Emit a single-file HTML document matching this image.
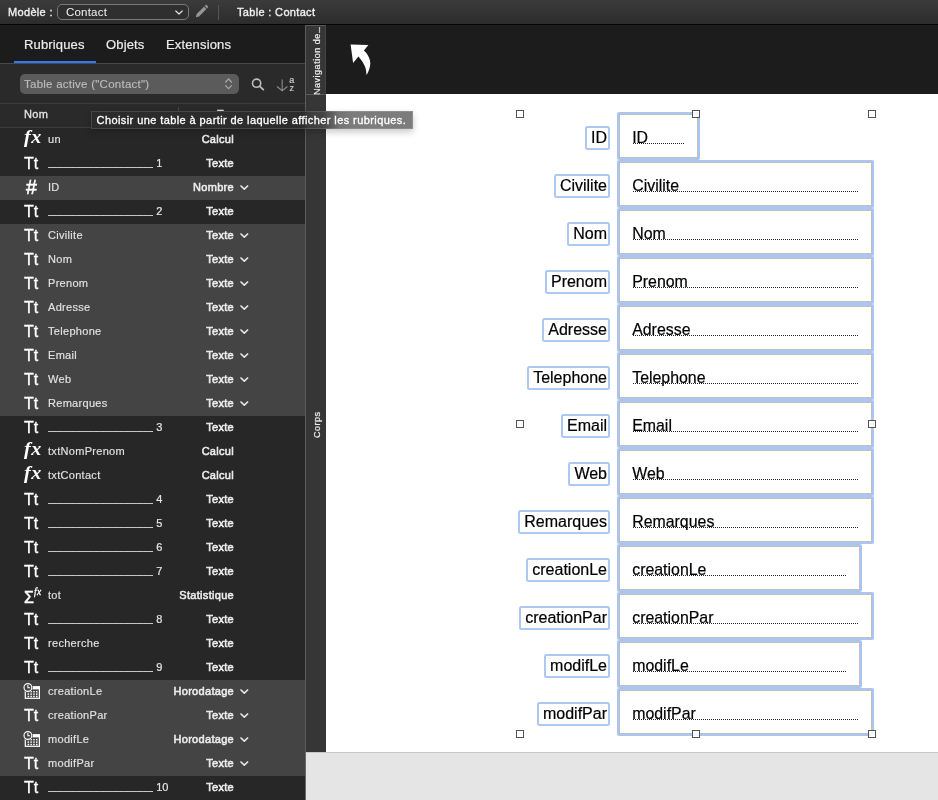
<!DOCTYPE html>
<html lang="fr">
<head>
<meta charset="utf-8">
<title>Modèle : Contact</title>
<style>
*{box-sizing:border-box;margin:0;padding:0}
html,body{width:938px;height:800px;overflow:hidden;background:#262626}
body{position:relative;font-family:"Liberation Sans",sans-serif;font-size:11px;color:#e6e6e6}
#app{position:absolute;left:0;top:0;width:938px;height:800px;overflow:hidden;will-change:transform}
#toolbar{position:absolute;left:0;top:0;width:938px;height:25px;background:linear-gradient(#3b3b3b,#2c2c2c);border-bottom:1px solid #050505}
#toolbar .lbl{position:absolute;left:8px;top:6px;font-size:11px;color:#f0f0f0;-webkit-text-stroke:0.35px #f0f0f0;letter-spacing:0.33px}
#sel{position:absolute;left:57px;top:4px;width:132px;height:16px;border:1px solid #7a7a7a;border-radius:5px;background:#2f2f2f}
#sel span{position:absolute;left:8px;top:0px;font-size:11.5px;color:#f2f2f2;line-height:14px;letter-spacing:0.2px}
#sel svg{position:absolute;left:116px;top:4px}
#pencil{position:absolute;left:194px;top:4px}
#tsep{position:absolute;left:218px;top:5px;width:1px;height:15px;background:#555}
#ttl{position:absolute;left:237px;top:6px;font-size:11px;color:#f0f0f0;-webkit-text-stroke:0.35px #f0f0f0;letter-spacing:0.33px}
#left{position:absolute;left:0;top:25px;width:305px;height:775px;background:#272727;overflow:hidden}
#tabs{position:absolute;left:0;top:0;width:305px;height:39px;background:#1c1c1c;border-bottom:1px solid #484848}
#tabs span{position:absolute;top:12px;font-size:13px;color:#ececec;letter-spacing:0.15px;-webkit-text-stroke:0.2px #ececec}
#tabul{position:absolute;left:14px;top:36px;width:82px;height:2.3px;background:#3478f6}
#searchrow{position:absolute;left:0;top:39px;width:305px;height:40px;background:#2a2a2a;border-bottom:1px solid #3d3d3d}
#pop{position:absolute;left:20px;top:10px;width:219px;height:20px;border-radius:5px;background:#5b5b5b}
#pop span{position:absolute;left:4px;top:4px;font-size:11.5px;color:#bdbdbd;letter-spacing:0.25px;-webkit-text-stroke:0.15px #bdbdbd}
#hdr{position:absolute;left:0;top:79px;width:305px;height:24px;background:#2a2a2a;border-bottom:1px solid #3d3d3d}
#hdr span{position:absolute;left:24px;top:4px;font-size:11px;color:#e6e6e6;-webkit-text-stroke:0.3px #e6e6e6;letter-spacing:0.3px}
#hdr i{position:absolute;left:178px;top:3px;width:1px;height:17px;background:#444}
.row{position:absolute;left:0;width:305px;height:24px;line-height:22px;white-space:nowrap}
.row.hl{background:#444}
.ic{position:absolute}
.tt{left:24px;top:0;font-size:16px;color:#fff;line-height:23px;-webkit-text-stroke:0.3px #fff}
.fx{left:24px;top:0;font-family:"Liberation Serif",serif;font-style:italic;font-weight:bold;font-size:18px;color:#fff;line-height:19px;letter-spacing:0.5px;transform:scaleX(1.12);transform-origin:0 0}
.num{left:26px;top:0;font-size:19.5px;color:#fff;line-height:23px;-webkit-text-stroke:0.5px #fff}
.sum{left:24px;top:0;font-size:16px;color:#fff;line-height:27px;-webkit-text-stroke:0.5px #fff}
.sum i{font-family:"Liberation Serif",serif;font-style:italic;font-size:9.5px;position:relative;top:-8px;left:0px;-webkit-text-stroke:0.3px #fff;letter-spacing:.5px}
.ts{left:23px;top:3px}
.nm{position:absolute;left:48px;top:0;color:#e2e2e2;letter-spacing:0.3px;-webkit-text-stroke:0.15px #e2e2e2}
.us{position:absolute;left:48px;top:-1px;width:105px;overflow:hidden;color:#d8d8d8;-webkit-text-stroke:0.3px #d8d8d8}
.un{position:absolute;left:156.2px;top:0;color:#e6e6e6;-webkit-text-stroke:0.2px #e6e6e6}
.ty{position:absolute;right:71px;top:0;color:#ececec;-webkit-text-stroke:0.55px #ececec;letter-spacing:0.3px}
.chev{position:absolute;left:240px;top:9px}
#strip{position:absolute;left:305px;top:25px;width:21px;height:727px;background:#363636;border-left:1px solid #5c5c5c}
#vline{position:absolute;left:305px;top:752px;width:1px;height:48px;background:#6a6a6a}
#nav{position:absolute;left:0;top:0;width:20px;height:70px;border-top:1px solid #5a5a5a;border-bottom:1px solid #5a5a5a;border-right:1px solid #444}
.vt{position:absolute;transform-origin:0 0;transform:rotate(-90deg);white-space:nowrap;font-size:9px;color:#f0f0f0;letter-spacing:0.52px;-webkit-text-stroke:0.2px #f0f0f0}
#band{position:absolute;left:326px;top:25px;width:612px;height:69px;background:#1c1c1c}
#paper{position:absolute;left:326px;top:94px;width:612px;height:658px;background:#fff}
#below{position:absolute;left:306px;top:752px;width:632px;height:48px;background:#e5e5e5;border-top:1px solid #c8c8c8}
.lab{-webkit-text-stroke:0.2px #000;position:absolute;right:328px;height:24px;border:2px solid #adc8f3;border-radius:2.5px;background:#fff;font-size:16px;color:#000;line-height:20px;padding:0 1px 0 4.2px;white-space:nowrap}
.fld{position:absolute;left:617px;height:48px;border:2px solid #a9c6f3;border-radius:2px;background:#fff}
.fld:after{content:"";position:absolute;left:0;top:0;right:0;bottom:0;border:1px solid #c2beba}
.ft{-webkit-text-stroke:0.2px #000;position:absolute;left:13.2px;top:15px;font-size:15.9px;color:#000;line-height:18px;white-space:nowrap}
.dots{position:absolute;left:14px;right:13px;top:29px;height:1px;background:repeating-linear-gradient(90deg,#222 0,#222 1px,transparent 1px,transparent 2px)}
.hd{position:absolute;width:8px;height:8px;border:1px solid #555;background:rgba(255,255,255,.85)}
#tip{position:absolute;left:91px;top:111px;width:322px;height:18px;border:1px solid rgba(255,255,255,.13);background:linear-gradient(90deg,#2b2b2b 0,#2c2c2c 212px,#3c3c3c 217px,#454545 232px,#727272 248px,#7c7c7c 262px,#7c7c7c 100%);background-origin:border-box;box-shadow:0 3px 7px rgba(0,0,0,.22);font-size:11px;color:#fff;-webkit-text-stroke:0.3px #fff;line-height:16px;padding-left:4.6px;white-space:nowrap;letter-spacing:0.41px}
</style>
</head>
<body><div id="app">
<div id="toolbar">
 <span class="lbl">Modèle :</span>
 <div id="sel"><span>Contact</span><svg width="10" height="7" viewBox="0 0 10 7"><path d="M1.8 2L5 5L8.2 2" fill="none" stroke="#e0e0e0" stroke-width="1.2" stroke-linecap="round" stroke-linejoin="round"/></svg></div>
 <svg id="pencil" width="15" height="15" viewBox="0 0 16 16"><path d="M2 14L2.8 10.6L10.6 2.8L13.2 5.4L5.4 13.2Z" fill="#969696"/><path d="M11.3 2.1L12.3 1.1Q12.9 .6 13.5 1.1L14.9 2.5Q15.4 3.1 14.9 3.7L13.9 4.7Z" fill="#8f8f8f"/></svg>
 <div id="tsep"></div>
 <span id="ttl">Table : Contact</span>
</div>
<div id="left">
 <div id="tabs"><span style="left:24px">Rubriques</span><span style="left:106px">Objets</span><span style="left:166px">Extensions</span></div>
 <div id="tabul"></div>
 <div id="searchrow">
  <div id="pop"><span>Table active ("Contact")</span>
   <svg style="position:absolute;left:204px;top:4px" width="9" height="12" viewBox="0 0 9 12"><path d="M1.6 4L4.55 1L7.5 4M1.6 7.6L4.55 10.6L7.5 7.6" fill="none" stroke="#a6a6a6" stroke-width="1.3" stroke-linecap="round" stroke-linejoin="round"/></svg>
  </div>
  <svg style="position:absolute;left:250px;top:13px" width="15" height="15" viewBox="0 0 15 15"><circle cx="6.6" cy="6.2" r="4.1" fill="none" stroke="#bdbdbd" stroke-width="1.6"/><path d="M9.6 9.2L13.3 12.6" stroke="#bdbdbd" stroke-width="1.8" stroke-linecap="round"/></svg>
  <svg style="position:absolute;left:275px;top:13px" width="22" height="16" viewBox="0 0 22 16"><path d="M7.2 2.5V13.5M2 9.5L7.2 13.7L12.4 9.5" fill="none" stroke="#8a8a8a" stroke-width="1.1"/><text x="14.2" y="6.2" font-family="Liberation Sans, sans-serif" font-size="9" fill="#c8c8c8" stroke="#c8c8c8" stroke-width=".2">a</text><text x="14.4" y="13.6" font-family="Liberation Sans, sans-serif" font-size="9" fill="#c8c8c8" stroke="#c8c8c8" stroke-width=".2">z</text></svg>
 </div>
 <div id="hdr"><span>Nom</span><i></i><span style="left:217px">Type</span></div>
</div>
<div id="rows" style="position:absolute;left:0;top:0;width:305px;height:800px;overflow:hidden">
<div class="row" style="top:128px"><span class="ic fx">fx</span><span class="nm">un</span><span class="ty">Calcul</span></div>
<div class="row" style="top:152px"><span class="ic tt">Tt</span><span class="us">__________________</span><span class="un">1</span><span class="ty">Texte</span></div>
<div class="row hl" style="top:176px"><span class="ic num">#</span><span class="nm">ID</span><span class="ty">Nombre</span><svg class="chev" width="9" height="6" viewBox="0 0 9 6"><path d="M1 1L4.3 4.2L7.6 1" fill="none" stroke="#e4e4e4" stroke-width="1.7" stroke-linecap="round" stroke-linejoin="round"/></svg></div>
<div class="row" style="top:200px"><span class="ic tt">Tt</span><span class="us">__________________</span><span class="un">2</span><span class="ty">Texte</span></div>
<div class="row hl" style="top:224px"><span class="ic tt">Tt</span><span class="nm">Civilite</span><span class="ty">Texte</span><svg class="chev" width="9" height="6" viewBox="0 0 9 6"><path d="M1 1L4.3 4.2L7.6 1" fill="none" stroke="#e4e4e4" stroke-width="1.7" stroke-linecap="round" stroke-linejoin="round"/></svg></div>
<div class="row hl" style="top:248px"><span class="ic tt">Tt</span><span class="nm">Nom</span><span class="ty">Texte</span><svg class="chev" width="9" height="6" viewBox="0 0 9 6"><path d="M1 1L4.3 4.2L7.6 1" fill="none" stroke="#e4e4e4" stroke-width="1.7" stroke-linecap="round" stroke-linejoin="round"/></svg></div>
<div class="row hl" style="top:272px"><span class="ic tt">Tt</span><span class="nm">Prenom</span><span class="ty">Texte</span><svg class="chev" width="9" height="6" viewBox="0 0 9 6"><path d="M1 1L4.3 4.2L7.6 1" fill="none" stroke="#e4e4e4" stroke-width="1.7" stroke-linecap="round" stroke-linejoin="round"/></svg></div>
<div class="row hl" style="top:296px"><span class="ic tt">Tt</span><span class="nm">Adresse</span><span class="ty">Texte</span><svg class="chev" width="9" height="6" viewBox="0 0 9 6"><path d="M1 1L4.3 4.2L7.6 1" fill="none" stroke="#e4e4e4" stroke-width="1.7" stroke-linecap="round" stroke-linejoin="round"/></svg></div>
<div class="row hl" style="top:320px"><span class="ic tt">Tt</span><span class="nm">Telephone</span><span class="ty">Texte</span><svg class="chev" width="9" height="6" viewBox="0 0 9 6"><path d="M1 1L4.3 4.2L7.6 1" fill="none" stroke="#e4e4e4" stroke-width="1.7" stroke-linecap="round" stroke-linejoin="round"/></svg></div>
<div class="row hl" style="top:344px"><span class="ic tt">Tt</span><span class="nm">Email</span><span class="ty">Texte</span><svg class="chev" width="9" height="6" viewBox="0 0 9 6"><path d="M1 1L4.3 4.2L7.6 1" fill="none" stroke="#e4e4e4" stroke-width="1.7" stroke-linecap="round" stroke-linejoin="round"/></svg></div>
<div class="row hl" style="top:368px"><span class="ic tt">Tt</span><span class="nm">Web</span><span class="ty">Texte</span><svg class="chev" width="9" height="6" viewBox="0 0 9 6"><path d="M1 1L4.3 4.2L7.6 1" fill="none" stroke="#e4e4e4" stroke-width="1.7" stroke-linecap="round" stroke-linejoin="round"/></svg></div>
<div class="row hl" style="top:392px"><span class="ic tt">Tt</span><span class="nm">Remarques</span><span class="ty">Texte</span><svg class="chev" width="9" height="6" viewBox="0 0 9 6"><path d="M1 1L4.3 4.2L7.6 1" fill="none" stroke="#e4e4e4" stroke-width="1.7" stroke-linecap="round" stroke-linejoin="round"/></svg></div>
<div class="row" style="top:416px"><span class="ic tt">Tt</span><span class="us">__________________</span><span class="un">3</span><span class="ty">Texte</span></div>
<div class="row" style="top:440px"><span class="ic fx">fx</span><span class="nm">txtNomPrenom</span><span class="ty">Calcul</span></div>
<div class="row" style="top:464px"><span class="ic fx">fx</span><span class="nm">txtContact</span><span class="ty">Calcul</span></div>
<div class="row" style="top:488px"><span class="ic tt">Tt</span><span class="us">__________________</span><span class="un">4</span><span class="ty">Texte</span></div>
<div class="row" style="top:512px"><span class="ic tt">Tt</span><span class="us">__________________</span><span class="un">5</span><span class="ty">Texte</span></div>
<div class="row" style="top:536px"><span class="ic tt">Tt</span><span class="us">__________________</span><span class="un">6</span><span class="ty">Texte</span></div>
<div class="row" style="top:560px"><span class="ic tt">Tt</span><span class="us">__________________</span><span class="un">7</span><span class="ty">Texte</span></div>
<div class="row" style="top:584px"><span class="ic sum">Σ<i>fx</i></span><span class="nm">tot</span><span class="ty">Statistique</span></div>
<div class="row" style="top:608px"><span class="ic tt">Tt</span><span class="us">__________________</span><span class="un">8</span><span class="ty">Texte</span></div>
<div class="row" style="top:632px"><span class="ic tt">Tt</span><span class="nm">recherche</span><span class="ty">Texte</span></div>
<div class="row" style="top:656px"><span class="ic tt">Tt</span><span class="us">__________________</span><span class="un">9</span><span class="ty">Texte</span></div>
<div class="row hl" style="top:680px"><svg class="ic ts" width="18" height="17" viewBox="0 0 18 17"><rect x="2.3" y="3.9" width="14.1" height="11.4" fill="none" stroke="#fff" stroke-width="1.2"/><rect x="1.7" y="3.3" width="15.3" height="3.1" fill="#fff"/><g fill="#fff"><rect x="4.6" y="8.0" width="1.5" height="1.4"/><rect x="7.4" y="8.0" width="1.5" height="1.4"/><rect x="10.2" y="8.0" width="1.5" height="1.4"/><rect x="13.0" y="8.0" width="1.5" height="1.4"/><rect x="4.6" y="10.4" width="1.5" height="1.4"/><rect x="7.4" y="10.4" width="1.5" height="1.4"/><rect x="10.2" y="10.4" width="1.5" height="1.4"/><rect x="13.0" y="10.4" width="1.5" height="1.4"/><rect x="4.6" y="12.8" width="1.5" height="1.4"/><rect x="7.4" y="12.8" width="1.5" height="1.4"/><rect x="10.2" y="12.8" width="1.5" height="1.4"/><rect x="13.0" y="12.8" width="1.5" height="1.4"/></g><circle cx="4.9" cy="4.5" r="5" fill="#444"/><circle cx="4.9" cy="4.5" r="3.9" fill="#444" stroke="#fff" stroke-width="1.15"/><path d="M4.9 2.1V4.8H7.1" fill="none" stroke="#fff" stroke-width="1.05"/></svg><span class="nm">creationLe</span><span class="ty">Horodatage</span><svg class="chev" width="9" height="6" viewBox="0 0 9 6"><path d="M1 1L4.3 4.2L7.6 1" fill="none" stroke="#e4e4e4" stroke-width="1.7" stroke-linecap="round" stroke-linejoin="round"/></svg></div>
<div class="row hl" style="top:704px"><span class="ic tt">Tt</span><span class="nm">creationPar</span><span class="ty">Texte</span><svg class="chev" width="9" height="6" viewBox="0 0 9 6"><path d="M1 1L4.3 4.2L7.6 1" fill="none" stroke="#e4e4e4" stroke-width="1.7" stroke-linecap="round" stroke-linejoin="round"/></svg></div>
<div class="row hl" style="top:728px"><svg class="ic ts" width="18" height="17" viewBox="0 0 18 17"><rect x="2.3" y="3.9" width="14.1" height="11.4" fill="none" stroke="#fff" stroke-width="1.2"/><rect x="1.7" y="3.3" width="15.3" height="3.1" fill="#fff"/><g fill="#fff"><rect x="4.6" y="8.0" width="1.5" height="1.4"/><rect x="7.4" y="8.0" width="1.5" height="1.4"/><rect x="10.2" y="8.0" width="1.5" height="1.4"/><rect x="13.0" y="8.0" width="1.5" height="1.4"/><rect x="4.6" y="10.4" width="1.5" height="1.4"/><rect x="7.4" y="10.4" width="1.5" height="1.4"/><rect x="10.2" y="10.4" width="1.5" height="1.4"/><rect x="13.0" y="10.4" width="1.5" height="1.4"/><rect x="4.6" y="12.8" width="1.5" height="1.4"/><rect x="7.4" y="12.8" width="1.5" height="1.4"/><rect x="10.2" y="12.8" width="1.5" height="1.4"/><rect x="13.0" y="12.8" width="1.5" height="1.4"/></g><circle cx="4.9" cy="4.5" r="5" fill="#444"/><circle cx="4.9" cy="4.5" r="3.9" fill="#444" stroke="#fff" stroke-width="1.15"/><path d="M4.9 2.1V4.8H7.1" fill="none" stroke="#fff" stroke-width="1.05"/></svg><span class="nm">modifLe</span><span class="ty">Horodatage</span><svg class="chev" width="9" height="6" viewBox="0 0 9 6"><path d="M1 1L4.3 4.2L7.6 1" fill="none" stroke="#e4e4e4" stroke-width="1.7" stroke-linecap="round" stroke-linejoin="round"/></svg></div>
<div class="row hl" style="top:752px"><span class="ic tt">Tt</span><span class="nm">modifPar</span><span class="ty">Texte</span><svg class="chev" width="9" height="6" viewBox="0 0 9 6"><path d="M1 1L4.3 4.2L7.6 1" fill="none" stroke="#e4e4e4" stroke-width="1.7" stroke-linecap="round" stroke-linejoin="round"/></svg></div>
<div class="row" style="top:776px"><span class="ic tt">Tt</span><span class="us">__________________</span><span class="un">10</span><span class="ty">Texte</span></div>
</div>
<div id="strip">
 <div id="nav"><span class="vt" style="left:5.7px;top:69px">Navigation de<span style="letter-spacing:-.5px">...</span></span></div>
 <span class="vt" style="left:5.7px;top:413px">Corps</span>
</div>
<div id="band">
 <svg style="position:absolute;left:22px;top:17px" width="26" height="36" viewBox="0 0 26 36"><path d="M2.6 2.6L20.4 2.9L15.9 8.4C20 12 23 18 22.2 23C21.7 27 20 31 18.4 33.1C18.6 27 17 22 10.4 14.4L5.1 21Z" fill="#fff"/></svg>
</div>
<div id="paper"></div>
<div id="below"></div><div id="vline"></div>
<div class="lab" style="top:126px"><span>ID</span></div>
<div class="fld" style="top:112px;width:83px"><span class="ft">ID</span><span class="dots"></span></div>
<div class="lab" style="top:174px"><span>Civilite</span></div>
<div class="fld" style="top:160px;width:257px"><span class="ft">Civilite</span><span class="dots"></span></div>
<div class="lab" style="top:222px"><span>Nom</span></div>
<div class="fld" style="top:208px;width:257px"><span class="ft">Nom</span><span class="dots"></span></div>
<div class="lab" style="top:270px"><span>Prenom</span></div>
<div class="fld" style="top:256px;width:257px"><span class="ft">Prenom</span><span class="dots"></span></div>
<div class="lab" style="top:318px"><span>Adresse</span></div>
<div class="fld" style="top:304px;width:257px"><span class="ft">Adresse</span><span class="dots"></span></div>
<div class="lab" style="top:366px"><span>Telephone</span></div>
<div class="fld" style="top:352px;width:257px"><span class="ft">Telephone</span><span class="dots"></span></div>
<div class="lab" style="top:414px"><span>Email</span></div>
<div class="fld" style="top:400px;width:257px"><span class="ft">Email</span><span class="dots"></span></div>
<div class="lab" style="top:462px"><span>Web</span></div>
<div class="fld" style="top:448px;width:257px"><span class="ft">Web</span><span class="dots"></span></div>
<div class="lab" style="top:510px"><span>Remarques</span></div>
<div class="fld" style="top:496px;width:257px"><span class="ft">Remarques</span><span class="dots"></span></div>
<div class="lab" style="top:558px"><span>creationLe</span></div>
<div class="fld" style="top:544px;width:245px"><span class="ft">creationLe</span><span class="dots"></span></div>
<div class="lab" style="top:606px"><span>creationPar</span></div>
<div class="fld" style="top:592px;width:257px"><span class="ft">creationPar</span><span class="dots"></span></div>
<div class="lab" style="top:654px"><span>modifLe</span></div>
<div class="fld" style="top:640px;width:245px"><span class="ft">modifLe</span><span class="dots"></span></div>
<div class="lab" style="top:702px"><span>modifPar</span></div>
<div class="fld" style="top:688px;width:257px"><span class="ft">modifPar</span><span class="dots"></span></div>
<div class="hd" style="left:516px;top:110px"></div><div class="hd" style="left:692px;top:110px"></div><div class="hd" style="left:868px;top:110px"></div><div class="hd" style="left:516px;top:420px"></div><div class="hd" style="left:868px;top:420px"></div><div class="hd" style="left:516px;top:730px"></div><div class="hd" style="left:692px;top:730px"></div><div class="hd" style="left:868px;top:730px"></div>
<div id="tip">Choisir une table à partir de laquelle afficher les rubriques.</div>
</div></body>
</html>
